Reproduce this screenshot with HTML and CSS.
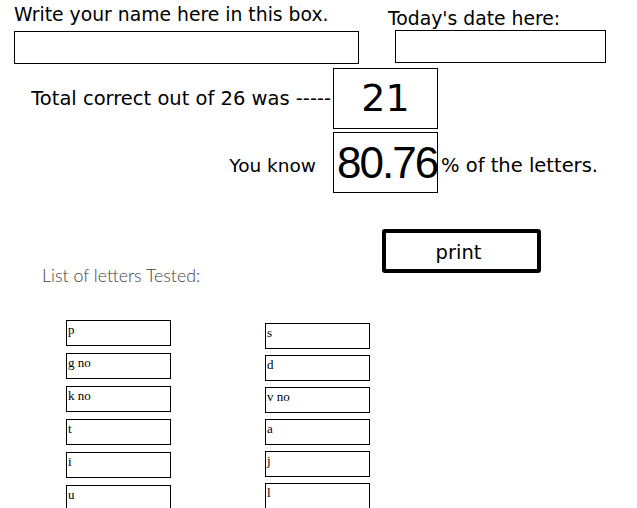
FILE: index.html
```html
<!DOCTYPE html>
<html lang="en">

<head>
  <meta charset="UTF-8" />
  <title>Letter Test</title>
  <link rel="stylesheet" href="styles.css">
</head>

<body>
  <!-- name and date -->
  <div class="top">
    <div class="name-field">
      <div class="label">Write your name here in this box.</div>
      <div class="box name-box"></div>
    </div>
    <div class="date-field">
      <div class="label">Today's date here:</div>
      <div class="box date-box"></div>
    </div>
  </div>

  <!-- score -->
  <div class="score-row">
    <div class="lead">Total correct out of 26 was -----</div>
    <div class="box result total">21</div>
  </div>
  <div class="score-row pct-row">
    <div class="lead know">You know</div>
    <div class="box result pct">80.76</div>
    <div class="tail">% of the letters.</div>
  </div>

  <!-- list heading and print -->
  <div class="list-head">
    <div class="list-title">List of letters Tested:</div>
    <div class="print-btn">print</div>
  </div>

  <!-- letters -->
  <div class="letters">
    <div class="col col-left">
      <div class="box letter">p</div>
      <div class="box letter">g no</div>
      <div class="box letter">k no</div>
      <div class="box letter">t</div>
      <div class="box letter">i</div>
      <div class="box letter">u</div>
    </div>
    <div class="col col-right">
      <div class="box letter">s</div>
      <div class="box letter">d</div>
      <div class="box letter">v no</div>
      <div class="box letter">a</div>
      <div class="box letter">j</div>
      <div class="box letter">l</div>
    </div>
  </div>
</body>

</html>
```

FILE: styles.css
```css
/* page */
body {
  margin: 0;
  width: 637px;
  height: 508px;
  overflow: hidden;
  background: #fff;
  color: #000;
  font-family: "DejaVu Sans", sans-serif;
}

.box {
  border: 1px solid #000;
  box-sizing: border-box;
}

/* name and date */
.top {
  display: flex;
  padding-left: 14px;
}

.label {
  font-size: 18.8px;
  line-height: 20px;
  white-space: nowrap;
}

.name-field {
  width: 345px;
  padding-top: 5px;
}

.name-box {
  margin-top: 6px;
  height: 33px;
}

.date-field {
  margin-left: 29px;
  padding-top: 9px;
}

.date-box {
  margin-left: 7px;
  margin-top: 1px;
  width: 211px;
  height: 33px;
}

/* score rows */
.score-row {
  display: flex;
  align-items: center;
}

.score-row:first-of-type {
  margin-top: 4px;
}

.lead {
  width: 331px;
  padding-right: 2px;
  padding-top: 4px;
  text-align: right;
  font-size: 19.5px;
  white-space: nowrap;
}

.know {
  padding-right: 17px;
  width: 316px;
  padding-top: 6px;
  font-size: 18.5px;
}

.result {
  width: 105px;
  height: 61px;
  overflow: hidden;
  text-align: center;
  white-space: nowrap;
}

.total {
  margin-top: 4px;
  font-size: 38px;
  line-height: 58px;
}

.pct-row {
  margin-top: 3px;
}

.pct {
  font-family: "Liberation Sans", sans-serif;
  font-size: 44px;
  line-height: 60px;
  text-align: left;
  padding-left: 3px;
  letter-spacing: -2px;
}

.tail {
  margin-left: 3px;
  padding-top: 6px;
  font-size: 19.5px;
  white-space: nowrap;
}

/* list heading */
.list-head {
  display: flex;
  align-items: flex-start;
  margin-top: 36px;
}

.list-title {
  margin-left: 42px;
  margin-top: 35px;
  width: 340px;
  font-family: "Lato", sans-serif;
  font-weight: 300;
  font-size: 17.8px;
  color: #444;
}

.print-btn {
  width: 159px;
  height: 44px;
  box-sizing: border-box;
  border: 4px solid #000;
  border-radius: 3px;
  text-align: center;
  font-size: 19.5px;
  line-height: 40px;
  padding-right: 6px;
}

/* letter boxes */
.letters {
  display: flex;
  margin-top: 34px;
}

.col {
  display: flex;
  flex-direction: column;
  gap: 7px;
}

.col-left {
  margin-left: 66px;
}

.col-right {
  margin-left: 94px;
  margin-top: 3px;
  gap: 6px;
}

.letter {
  width: 105px;
  height: 26px;
  padding-left: 1px;
  font-family: "Liberation Serif", serif;
  font-size: 13px;
  line-height: 18px;
}
```
